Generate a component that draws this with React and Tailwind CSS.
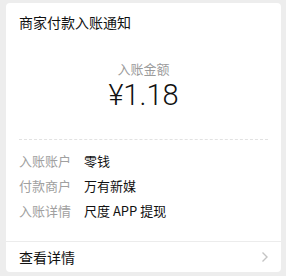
import React from 'react';

const rows = [
  { label: '入账账户', value: '零钱' },
  { label: '付款商户', value: '万有新媒' },
  { label: '入账详情', value: '尺度 APP 提现' },
];

const App = () => {
  return (
    <div
      className="w-[286px] h-[276px] bg-[#ededed] pt-[3px] pl-[6px] pr-[5px]"
      style={{ fontFamily: '"Noto Sans CJK SC", "Noto Sans", sans-serif' }}
    >
      <div className="bg-white rounded-[4px] h-[269px] flex flex-col">
        {/* Title */}
        <div className="px-[13px] pt-[9px] text-[14px] leading-[20px] text-[#111]">
          商家付款入账通知
        </div>

        {/* Amount */}
        <div className="mt-[28px] flex flex-col items-center">
          <div className="text-[13px] leading-[18px] text-[#9b9b9b]">入账金额</div>
          <div className="text-[29px] leading-[34px] font-light text-[#111] font-['Roboto',sans-serif]">
            ¥1.18
          </div>
        </div>

        {/* Dashed divider */}
        <div className="mx-[13px] mt-[27px] border-t border-dashed border-[#e2e2e2]" />

        {/* Detail rows */}
        <div className="px-[13px] mt-[8px] flex flex-col">
          {rows.map((r) => (
            <div key={r.label} className="flex items-center h-[25px] text-[13px]">
              <span className="w-[65px] text-[#a0a0a0]">{r.label}</span>
              <span className="text-[#111]">{r.value}</span>
            </div>
          ))}
        </div>

        {/* Footer */}
        <div className="mt-auto border-t border-[#ececec] h-[31px] flex items-center justify-between pl-[13px] pr-[12px]">
          <span className="text-[14px] text-[#111]">查看详情</span>
          <svg width="8" height="12" viewBox="0 0 8 12" fill="none">
            <path d="M1.5 1.5L6 6L1.5 10.5" stroke="#c4c4c4" strokeWidth="1.4" />
          </svg>
        </div>
      </div>
    </div>
  );
};

export default App;
